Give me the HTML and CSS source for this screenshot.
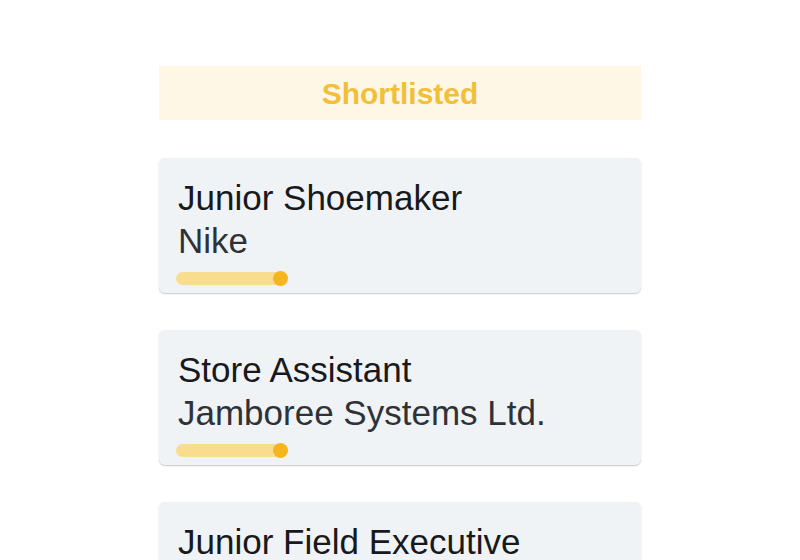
FILE: index.html
```html
<!DOCTYPE html>
<html lang="en">
<head>
<meta charset="utf-8">
<title>Shortlisted</title>
<link rel="stylesheet" href="styles.css">
</head>
<body>
<main class="column">
  <div class="column-header">Shortlisted</div>
  <div class="card-list">
    <div class="card">
      <div class="card-title">Junior Shoemaker</div>
      <div class="card-company">Nike</div>
      <div class="progress"><span class="progress-fill"></span><span class="progress-dot"></span></div>
    </div>
    <div class="card">
      <div class="card-title">Store Assistant</div>
      <div class="card-company">Jamboree Systems Ltd.</div>
      <div class="progress"><span class="progress-fill"></span><span class="progress-dot"></span></div>
    </div>
    <div class="card">
      <div class="card-title">Junior Field Executive</div>
      <div class="card-company">Acme Corp</div>
      <div class="progress"><span class="progress-fill"></span><span class="progress-dot"></span></div>
    </div>
  </div>
</main>
</body>
</html>
```

FILE: styles.css
```css
html, body {
  margin: 0;
  padding: 0;
  background: #ffffff;
}

body {
  font-family: "Liberation Sans", Arial, sans-serif;
  overflow: hidden;
}

.column {
  width: 482px;
  margin: 0 auto;
  padding-top: 66px;
  display: flex;
  flex-direction: column;
  gap: 38px;
}

.column-header {
  height: 54px;
  line-height: 56px;
  background: #fef7e6;
  color: #f1bf3a;
  font-weight: 700;
  font-size: 30px;
  text-align: center;
}

.card-list {
  display: flex;
  flex-direction: column;
  gap: 37px;
}

.card {
  background: #f0f3f6;
  border-radius: 6px;
  box-shadow: 0 1px 1.5px rgba(0, 0, 0, 0.22);
  padding: 18px 19px 8px 19px;
  height: 135px;
  box-sizing: border-box;
}

.card-title {
  font-size: 35px;
  line-height: 43px;
  color: #17191c;
}

.card-company {
  font-size: 35px;
  line-height: 43px;
  color: #2e3236;
}

.progress {
  margin-top: 9px;
  margin-left: -2px;
  width: 112px;
  height: 14px;
  position: relative;
  display: flex;
  align-items: center;
}

.progress-fill {
  display: block;
  width: 110px;
  height: 13px;
  border-radius: 7px;
  background: #f9dd8f;
}

.progress-dot {
  position: absolute;
  right: 0;
  top: 0;
  width: 15px;
  height: 15px;
  border-radius: 50%;
  background: #f5b51f;
}
```
